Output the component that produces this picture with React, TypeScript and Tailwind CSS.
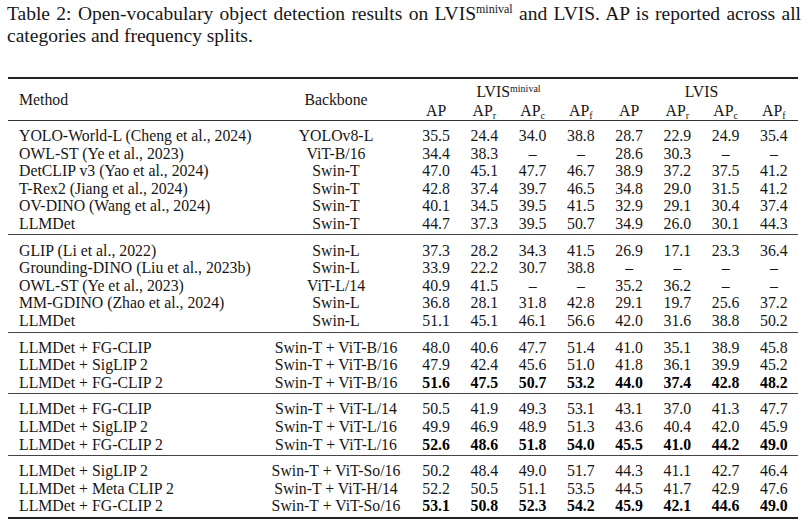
const serif = { fontFamily: '"Liberation Serif", "Times New Roman", serif' }

type Row = { method: string; backbone: string; vals: string[]; bold?: boolean }

const groups: Row[][] = [
  [
    { method: 'YOLO-World-L (Cheng et al., 2024)', backbone: 'YOLOv8-L', vals: ['35.5', '24.4', '34.0', '38.8', '28.7', '22.9', '24.9', '35.4'] },
    { method: 'OWL-ST (Ye et al., 2023)', backbone: 'ViT-B/16', vals: ['34.4', '38.3', '–', '–', '28.6', '30.3', '–', '–'] },
    { method: 'DetCLIP v3 (Yao et al., 2024)', backbone: 'Swin-T', vals: ['47.0', '45.1', '47.7', '46.7', '38.9', '37.2', '37.5', '41.2'] },
    { method: 'T-Rex2 (Jiang et al., 2024)', backbone: 'Swin-T', vals: ['42.8', '37.4', '39.7', '46.5', '34.8', '29.0', '31.5', '41.2'] },
    { method: 'OV-DINO (Wang et al., 2024)', backbone: 'Swin-T', vals: ['40.1', '34.5', '39.5', '41.5', '32.9', '29.1', '30.4', '37.4'] },
    { method: 'LLMDet', backbone: 'Swin-T', vals: ['44.7', '37.3', '39.5', '50.7', '34.9', '26.0', '30.1', '44.3'] },
  ],
  [
    { method: 'GLIP (Li et al., 2022)', backbone: 'Swin-L', vals: ['37.3', '28.2', '34.3', '41.5', '26.9', '17.1', '23.3', '36.4'] },
    { method: 'Grounding-DINO (Liu et al., 2023b)', backbone: 'Swin-L', vals: ['33.9', '22.2', '30.7', '38.8', '–', '–', '–', '–'] },
    { method: 'OWL-ST (Ye et al., 2023)', backbone: 'ViT-L/14', vals: ['40.9', '41.5', '–', '–', '35.2', '36.2', '–', '–'] },
    { method: 'MM-GDINO (Zhao et al., 2024)', backbone: 'Swin-L', vals: ['36.8', '28.1', '31.8', '42.8', '29.1', '19.7', '25.6', '37.2'] },
    { method: 'LLMDet', backbone: 'Swin-L', vals: ['51.1', '45.1', '46.1', '56.6', '42.0', '31.6', '38.8', '50.2'] },
  ],
  [
    { method: 'LLMDet + FG-CLIP', backbone: 'Swin-T + ViT-B/16', vals: ['48.0', '40.6', '47.7', '51.4', '41.0', '35.1', '38.9', '45.8'] },
    { method: 'LLMDet + SigLIP 2', backbone: 'Swin-T + ViT-B/16', vals: ['47.9', '42.4', '45.6', '51.0', '41.8', '36.1', '39.9', '45.2'] },
    { method: 'LLMDet + FG-CLIP 2', backbone: 'Swin-T + ViT-B/16', vals: ['51.6', '47.5', '50.7', '53.2', '44.0', '37.4', '42.8', '48.2'], bold: true },
  ],
  [
    { method: 'LLMDet + FG-CLIP', backbone: 'Swin-T + ViT-L/14', vals: ['50.5', '41.9', '49.3', '53.1', '43.1', '37.0', '41.3', '47.7'] },
    { method: 'LLMDet + SigLIP 2', backbone: 'Swin-T + ViT-L/16', vals: ['49.9', '46.9', '48.9', '51.3', '43.6', '40.4', '42.0', '45.9'] },
    { method: 'LLMDet + FG-CLIP 2', backbone: 'Swin-T + ViT-L/16', vals: ['52.6', '48.6', '51.8', '54.0', '45.5', '41.0', '44.2', '49.0'], bold: true },
  ],
  [
    { method: 'LLMDet + SigLIP 2', backbone: 'Swin-T + ViT-So/16', vals: ['50.2', '48.4', '49.0', '51.7', '44.3', '41.1', '42.7', '46.4'] },
    { method: 'LLMDet + Meta CLIP 2', backbone: 'Swin-T + ViT-H/14', vals: ['52.2', '50.5', '51.1', '53.5', '44.5', '41.7', '42.9', '47.6'] },
    { method: 'LLMDet + FG-CLIP 2', backbone: 'Swin-T + ViT-So/16', vals: ['53.1', '50.8', '52.3', '54.2', '45.9', '42.1', '44.6', '49.0'], bold: true },
  ],
]

const cols = 'grid grid-cols-[258px_146px_repeat(8,48.25px)]'

// padding above / below each block of rows, between the rules
const groupPad = ['pt-[6px] pb-[1px]', 'pt-[7px] pb-[2px]', 'pt-[6px] pb-[2px]', 'pt-[6px] pb-[2px]', 'pt-[6px] pb-[2px]']

function Ap({ sub }: { sub?: string }) {
  return (
    <span>
      AP{sub && <span className="relative top-[3px] text-[10px] leading-none">{sub}</span>}
    </span>
  )
}

export default function App() {
  return (
    <div className="w-[808px] h-[524px] bg-white text-[#161616] overflow-hidden" style={serif}>
      <p className="ml-[7px] w-[794px] pt-[3px] text-[19.5px] leading-[22px] text-justify">
        Table 2: Open-vocabulary object detection results on LVIS
        <span className="relative -top-[7px] text-[12px] leading-none">minival</span> and LVIS. AP is reported across all
        categories and frequency splits.
      </p>

      <div className="mt-[30px] ml-[8px] w-[790px] border-t-2 border-b-2 border-[#222] text-[15.8px]">
        <div className={`${cols} h-[42px] border-b border-[#333] items-center`}>
          <div className="pl-[11px] pt-[1px]">Method</div>
          <div className="text-center pr-[6px] pt-[1px]">Backbone</div>
          <div className="col-span-8 flex flex-col">
            <div className="flex h-[18px] items-center pt-[4px]">
              <div className="w-1/2 text-center">
                LVIS<span className="relative -top-[5px] text-[10px] leading-none">minival</span>
              </div>
              <div className="w-1/2 text-center">LVIS</div>
            </div>
            <div className="grid grid-cols-8 text-center h-[19px] items-center">
              <Ap />
              <Ap sub="r" />
              <Ap sub="c" />
              <Ap sub="f" />
              <Ap />
              <Ap sub="r" />
              <Ap sub="c" />
              <Ap sub="f" />
            </div>
          </div>
        </div>

        {groups.map((g, gi) => (
          <div key={gi} className={`${groupPad[gi]} ${gi > 0 ? 'border-t border-[#444]' : ''}`}>
            {g.map((r, ri) => (
              <div key={ri} className={`${cols} h-[17.6px] items-center leading-[17.6px]`}>
                <div className="pl-[11px] whitespace-nowrap">{r.method}</div>
                <div className="text-center pr-[6px] whitespace-nowrap">{r.backbone}</div>
                {r.vals.map((v, vi) => (
                  <div key={vi} className={`text-center ${r.bold ? 'font-bold text-black' : ''}`}>
                    {v}
                  </div>
                ))}
              </div>
            ))}
          </div>
        ))}
      </div>
    </div>
  )
}
